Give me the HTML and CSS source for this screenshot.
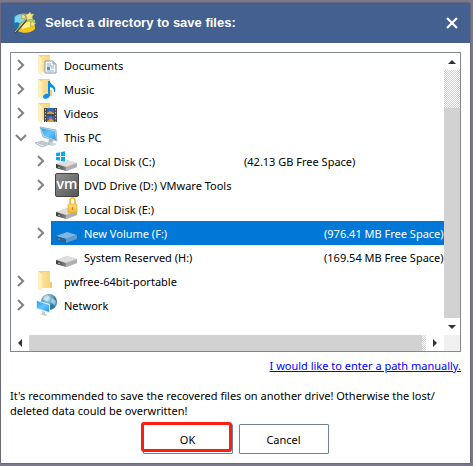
FILE: index.html
```html
<!DOCTYPE html>
<html lang="en">
<head>
    <meta charset="UTF-8">
    <meta name="viewport" content="width=device-width, initial-scale=1.0">
    <title>Select a directory</title>
    <link rel="stylesheet" href="styles.css">
</head>
<body>
    <!-- shared icon shapes -->
    <svg class="defs" width="0" height="0" aria-hidden="true">
        <defs>
            <linearGradient id="g-folder" x1="0" x2="1"><stop offset="0" stop-color="#fbe3a0"/><stop offset="1" stop-color="#f8d675"/></linearGradient>
            <linearGradient id="g-screen" x1="0" y1="0" x2="1" y2="1"><stop offset="0" stop-color="#2aa0ee"/><stop offset=".5" stop-color="#66c4fb"/><stop offset="1" stop-color="#2498e8"/></linearGradient>
            <linearGradient id="g-front" x1="0" x2="1"><stop offset="0" stop-color="#383838"/><stop offset="1" stop-color="#8a8a8a"/></linearGradient>
            <linearGradient id="g-vm" x1="0" y1="0" x2="1" y2="1"><stop offset="0" stop-color="#929292"/><stop offset="1" stop-color="#555"/></linearGradient>
            <radialGradient id="g-globe" cx=".4" cy=".3"><stop offset="0" stop-color="#c5e8f4"/><stop offset="1" stop-color="#2e7ba6"/></radialGradient>
            <linearGradient id="g-gold" x1="0" y1="0" x2="0" y2="1"><stop offset="0" stop-color="#ffe07a"/><stop offset="1" stop-color="#f2b436"/></linearGradient>
        </defs>
        <symbol id="right" viewBox="0 0 12 12"><path d="M3 1l5 5-5 5" fill="none" stroke="#858585" stroke-width="2.200"/></symbol>
        <symbol id="down" viewBox="0 0 12 12"><path d="M1 4l5 5 5-5" fill="none" stroke="#858585" stroke-width="2.200"/></symbol>
        <symbol id="folder" viewBox="0 0 24 24">
            <path d="M3 2h12v17H6l-3 1z" fill="#f3d17b"/>
            <path d="M14 13h3v6h-3z" fill="#f2ce70"/>
            <path d="M3 2l4 3v17l-4-2z" fill="#fff0bd"/>
            <path d="M7 3h8v16H7z" fill="url(#g-folder)"/>
        </symbol>
        <symbol id="drive" viewBox="0 0 24 24">
            <path d="M1 15l11-4 10 3v4l-10 4-11-3z" fill="#c3c3c3"/>
            <path d="M1 15l11-4 10 3-11 4z" fill="#dedede"/>
            <path d="M1 15l10 3v4L1 19z" fill="url(#g-front)"/>
            <path d="M11 18l11-4v4l-11 4z" fill="#b0b0b0"/>
            <path d="M3 18l2 .6" stroke="#5fd39a" stroke-width="1.200"/>
        </symbol>
    </svg>

    <main class="dialog">
        <header class="titlebar">
            <svg class="logo" viewBox="0 0 24 24" aria-hidden="true">
                <path d="M1 6c3-4 16-5 19 0l1 8H1z" fill="#2e9bd6"/>
                <path d="M2 6c4-4 12-4 16-1L9 11 2 14z" fill="#80d5ee"/>
                <path d="M1 12l2 7c2 2 6 2 9 1L5 11z" fill="#1677a9"/>
                <path d="M6 14C10 9 16 8 22 9v9c-3 4-12 5-17 2z" fill="#f5c619"/>
                <path d="M8 14c4-3 9-4 13-3l-2 4-10 3z" fill="#fff18a"/>
                <path d="M16 8l6 1v5l-4 2z" fill="#9fd07a"/>
                <path d="M2 22L16 6" stroke="#494d48" stroke-width="2"/>
                <path d="M2 21L15 6" stroke="#e4e8d7" stroke-width=".8"/>
                <path d="M17 1l1 2 3 0-2 3 1 3-3-1-3 2 0-4-3-2 4-1zM10 3l1 1.500 2 0-1 2 0 2-2-1-2 0 1-2-1-2 2 0zM20 10l1 2 2 0-2 2 0 2-2-1-2 0 1-2-1-2 2 0z" fill="#f1e58a" stroke="#a8963a" stroke-width=".6"/>
            </svg>
            <h1>Select a directory to save files:</h1>
            <button class="close" type="button" aria-label="Close">
                <svg viewBox="0 0 12 12"><path d="M1 1l10 10M11 1L1 11" stroke="#fff" stroke-width="2.200"/></svg>
            </button>
        </header>

        <section class="content">
            <div class="browser">
                <ul class="tree">
                    <li class="row">
                        <button class="toggle" type="button" aria-label="Expand Documents"><svg><use href="#right"/></svg></button>
                        <div class="item">
                            <svg class="icon" viewBox="0 0 24 24"><use href="#folder"/><path d="M10 8h8l3 3v9H10z" fill="#f8fbfd" stroke="#8d9ba6"/><path d="M18 8v3h3" fill="#ddd" stroke="#8d9ba6"/><path d="M12 11h4M12 13h7M16 15h3M12 18h7" stroke="#8eabc2"/><path d="M12 14h3v3h-3z" fill="#3f9bd8"/></svg>
                            <span>Documents</span>
                        </div>
                    </li>
                    <li class="row">
                        <button class="toggle" type="button" aria-label="Expand Music"><svg><use href="#right"/></svg></button>
                        <div class="item">
                            <svg class="icon" viewBox="0 0 24 24"><use href="#folder"/><path d="M13 4h2c0 4 7 4 5 11h-1c0-3-1-4-4-5v8c0 4-7 5-7 2 0-2 3-4 5-3z" fill="#0c91ea"/></svg>
                            <span>Music</span>
                        </div>
                    </li>
                    <li class="row">
                        <button class="toggle" type="button" aria-label="Expand Videos"><svg><use href="#right"/></svg></button>
                        <div class="item">
                            <svg class="icon" viewBox="0 0 24 24"><use href="#folder"/><path d="M9 7h13v14H9z" fill="#4a4a4a"/><path d="M12 7h7v6h-7zM12 15h7v6h-7z" fill="#2968bd"/><path d="M12 12l3-2 4 2v1h-7zM12 20l4-3 3 3v1h-7z" fill="#d69c38"/><path d="M14 16h3v2h-3z" fill="#e1513e"/><path d="M10.500 8v13M20.500 8v13" stroke="#bbb" stroke-dasharray="1.500 1.500"/></svg>
                            <span>Videos</span>
                        </div>
                    </li>
                    <li class="row">
                        <button class="toggle" type="button" aria-label="Collapse This PC"><svg><use href="#down"/></svg></button>
                        <div class="item">
                            <svg class="icon" viewBox="0 0 24 24"><path d="M5 2l16 3 1 11-14-4z" fill="#cfe3f2" stroke="#6f8ba0" stroke-width=".6"/><path d="M6 3l14 3 1 9-12-4z" fill="url(#g-screen)"/><path d="M14 14l4 1-1 4h-4z" fill="#aab6bf"/><path d="M11 18l5-1 6 2-5 2z" fill="#cbd3d9"/><path d="M0 18l7-2 8 3-8 3z" fill="#dbe1e6" stroke="#9ba8b1" stroke-width=".7"/><path d="M3 18l8 2M5 17l7 2" stroke="#9ba8b1" stroke-width=".6"/></svg>
                            <span>This PC</span>
                        </div>
                    </li>
                    <li class="row child">
                        <button class="toggle" type="button" aria-label="Expand Local Disk (C:)"><svg><use href="#right"/></svg></button>
                        <div class="item">
                            <svg class="icon" viewBox="0 0 24 24"><use href="#drive"/><path d="M1 4l4-.7v3.700H1zM6 3l4-.7V7H6zM1 8h4v3.700L1 11zM6 8h4v4.500L6 12z" fill="#00adef"/></svg>
                            <span class="name">Local Disk (C:)</span>
                            <span>(42.13 GB Free Space)</span>
                        </div>
                    </li>
                    <li class="row child">
                        <button class="toggle" type="button" aria-label="Expand DVD Drive (D:)"><svg><use href="#right"/></svg></button>
                        <div class="item">
                            <svg class="icon" viewBox="0 0 24 24"><rect x=".5" y=".5" width="23" height="23" rx="1.500" fill="url(#g-vm)" stroke="#424242"/><text class="vm" x="12" y="16" text-anchor="middle">vm</text></svg>
                            <span>DVD Drive (D:) VMware Tools</span>
                        </div>
                    </li>
                    <li class="row child">
                        <span class="toggle"></span>
                        <div class="item">
                            <svg class="icon" viewBox="0 0 24 24"><use href="#drive"/><path d="M15 9V4c0-4 5-4 5 0v5" fill="none" stroke="#eebc35" stroke-width="1.600"/><rect x="13" y="7" width="9" height="9" rx="1" fill="url(#g-gold)" stroke="#d99b21" stroke-width=".6"/><path d="M17.500 10v3" stroke="#c98510" stroke-width="1.200"/></svg>
                            <span>Local Disk (E:)</span>
                        </div>
                    </li>
                    <li class="row child">
                        <button class="toggle" type="button" aria-label="Expand New Volume (F:)"><svg><use href="#right"/></svg></button>
                        <div class="item selected">
                            <svg class="icon" viewBox="0 0 24 24"><path d="M1 15l11-4 10 3-11 4z" fill="#80b5e1"/><path d="M1 15l10 3v4L1 19z" fill="#246496"/><path d="M11 18l11-4v4l-11 4z" fill="#5f9bcc"/><path d="M3 18l2 .6" stroke="#38b4b6" stroke-width="1.200"/></svg>
                            <span class="name wide">New Volume (F:)</span>
                            <span>(976.41 MB Free Space)</span>
                        </div>
                    </li>
                    <li class="row child">
                        <span class="toggle"></span>
                        <div class="item">
                            <svg class="icon" viewBox="0 0 24 24"><use href="#drive"/></svg>
                            <span class="name wide">System Reserved (H:)</span>
                            <span>(169.54 MB Free Space)</span>
                        </div>
                    </li>
                    <li class="row">
                        <button class="toggle" type="button" aria-label="Expand pwfree-64bit-portable"><svg><use href="#right"/></svg></button>
                        <div class="item">
                            <svg class="icon" viewBox="0 0 24 24"><use href="#folder"/></svg>
                            <span>pwfree-64bit-portable</span>
                        </div>
                    </li>
                    <li class="row">
                        <button class="toggle" type="button" aria-label="Expand Network"><svg><use href="#right"/></svg></button>
                        <div class="item">
                            <svg class="icon" viewBox="0 0 24 24"><circle cx="14" cy="9" r="8" fill="url(#g-globe)"/><path d="M9 4c3-3 5-1 6 1l-3 3-4-1zM17 5l4 3-1 5-4-4z" fill="#e0f1f5" opacity=".6"/><path d="M1 7l14 4v9L1 16z" fill="#d9f0fd"/><path d="M2 8l12 4v7L2 15z" fill="url(#g-screen)"/><path d="M7 18l3 1v2l3 1-3 1-5-2 2-1z" fill="#c3cfd7"/></svg>
                            <span>Network</span>
                        </div>
                    </li>
                </ul>
                <div class="scroll-y">
                    <button class="arrow" type="button" aria-label="Scroll up"><svg viewBox="0 0 8 4"><path d="M0 4l4-4 4 4z"/></svg></button>
                    <div class="track"></div>
                    <div class="thumb"></div>
                    <button class="arrow" type="button" aria-label="Scroll down"><svg viewBox="0 0 8 4"><path d="M0 0l4 4 4-4z"/></svg></button>
                </div>
                <div class="scroll-x">
                    <button class="arrow" type="button" aria-label="Scroll left"><svg class="side" viewBox="0 0 4 8"><path d="M4 0L0 4l4 4z"/></svg></button>
                    <div class="thumb"></div>
                    <div class="track"></div>
                    <button class="arrow" type="button" aria-label="Scroll right"><svg class="side" viewBox="0 0 4 8"><path d="M0 0l4 4-4 4z"/></svg></button>
                </div>
                <div class="corner"></div>
            </div>
            <a class="manual" href="#">I would like to enter a path manually.</a>
            <p class="note">It's recommended to save the recovered files on another drive! Otherwise the lost/<wbr>deleted data could be overwritten!</p>
            <div class="buttons">
                <button class="btn marked" type="button">OK</button>
                <button class="btn" type="button">Cancel</button>
            </div>
        </section>
    </main>
</body>
</html>
```
FILE: styles.css
```css
*{
    margin: 0;
    padding: 0;
    box-sizing: border-box;
}

body{
    min-height: 100vh;
    display: flex;
    padding: 3px 3px 3px 1px;
    background-color: #7c7a8c;
    font-family: "Noto Sans", "Open Sans", sans-serif;
    font-size: 11px;
    color: #000;
}

button{
    font: inherit;
    color: inherit;
    border: none;
    background: none;
}

.defs{
    position: absolute;
}

.dialog{
    flex: 1;
    min-width: 0;
    background-color: #fff;
    box-shadow: 0 0 2px #44445f;
}

.titlebar{
    height: 40px;
    display: flex;
    align-items: center;
    padding: 0 12px;
    background-color: #436090;
    color: #fff;
}

.logo{
    width: 24px;
    height: 24px;
    margin-right: 8px;
}

.titlebar h1{
    flex: 1;
    font-family: "Liberation Sans", sans-serif;
    font-size: 13px;
    line-height: 20px;
}

.close{
    width: 12px;
    height: 12px;
}

.close svg{
    display: block;
}

.content{
    display: flex;
    flex-direction: column;
    padding: 9px 9px 0;
}

.browser{
    display: grid;
    grid-template-columns: minmax(0, 1fr) 16px;
    grid-template-rows: auto 16px;
    border: 1px solid #828790;
}

.tree{
    list-style: none;
    overflow: hidden;
    padding-bottom: 18px;
}

.row{
    height: 24px;
    display: flex;
}

.child{
    padding-left: 20px;
}

.toggle{
    flex: none;
    width: 20px;
    display: flex;
    align-items: center;
    justify-content: center;
}

.toggle svg{
    width: 12px;
    height: 12px;
}

.item{
    flex: 1;
    min-width: 0;
    display: flex;
    align-items: center;
    padding-left: 4px;
    white-space: nowrap;
}

.selected{
    background-color: #0078d7;
    color: #fff;
}

.icon{
    flex: none;
    width: 24px;
    height: 24px;
    margin-right: 5px;
}

.vm{
    font-family: "Open Sans", sans-serif;
    font-size: 14px;
    font-weight: 600;
    fill: #fff;
}

.name{
    flex: none;
    width: 160px;
}

.wide{
    width: 240px;
}

.scroll-y{
    display: flex;
    flex-direction: column;
}

.scroll-x{
    display: flex;
}

.arrow{
    flex: none;
    width: 16px;
    height: 17px;
    display: flex;
    align-items: center;
    justify-content: center;
}

.arrow svg{
    width: 8px;
    height: 4px;
    fill: #333;
}

.arrow .side{
    width: 4px;
    height: 8px;
}

.scroll-x .arrow{
    width: 18px;
    height: 16px;
}

.thumb{
    flex: 1;
    background-color: #d2d2d2;
}

.track{
    flex: none;
    background: repeating-conic-gradient(#d2d2d2 0 25%, #fff 0 50%) 0 0 / 2px 2px;
}

.scroll-y .track{
    height: 38px;
}

.scroll-x .track{
    width: 4px;
}

.corner{
    background-color: #f0f0f0;
}

.manual{
    align-self: flex-end;
    margin-top: 6px;
    font-size: 11px;
    line-height: 16px;
    color: #00f;
}

.note{
    margin-top: 14px;
    line-height: 15px;
}

.buttons{
    display: flex;
    justify-content: center;
    gap: 6px;
    margin-top: 6px;
}

.btn{
    position: relative;
    width: 90px;
    height: 30px;
    border: 1px solid #708196;
    border-radius: 1px;
    background-color: #fff;
}

.marked::after{
    content: "";
    position: absolute;
    inset: -3px 0 1px -3px;
    border: 3px solid #fb1f12;
    border-radius: 3px;
}
```
